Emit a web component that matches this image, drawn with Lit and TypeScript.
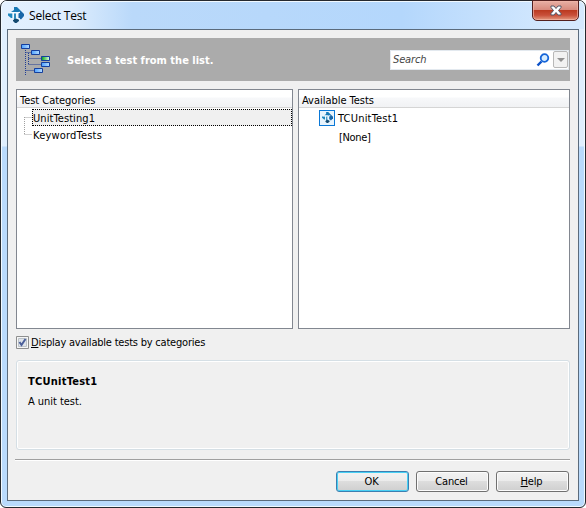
import { LitElement, html, css, svg } from "lit";
import { customElement } from "lit/decorators.js";

const logo = svg`
  <path d="M3 5L6 3V0L9 0L13 4V5Z" fill="#1778b4"/>
  <path d="M0 6.500H4.500V11H3L0 8.500Z" fill="#1e87bd"/>
  <path d="M10.500 6L13 4L16 7V9L13 12.500L10.500 11Z" fill="#1766a8"/>
  <path d="M6 11L11 12.500V14L8.500 16H7L5 14V12Z" fill="#154a70"/>
  <path d="M6 6.500H8V12H6Z" fill="#2d8abb"/>
  <path d="M1.500 5.500H8.500M5.200 5.500V13M12 5.500C7.500 5 7.500 12.500 12 11.800" fill="none" stroke="#f4faff" stroke-width="1.200"/>`;

@customElement("app-root")
export class AppRoot extends LitElement {
  static styles = css`
    * { box-sizing: border-box; }
    :host { display: block; width: 586px; height: 508px; background: #fff;
      font: 11px/14px "DejaVu Sans Condensed", "DejaVu Sans", sans-serif; font-stretch: condensed; color: #000; }
    svg { display: block; flex: none; }
    .window { position: relative; width: 586px; height: 508px; border: 1px solid #25292f; border-radius: 7px 7px 6px 6px;
      box-shadow: inset 0 0 0 1px #f1f9ff; padding: 0 6px 6px; display: flex; flex-direction: column;
      background: linear-gradient(#e0effe 0 145px, #b9dafc 146px 100%); }
    .title { height: 28px; flex: none; display: flex; align-items: center; margin: 0 -5px; padding-left: 6px; gap: 5px; border-radius: 5px 5px 0 0;
      background: linear-gradient(90deg, #e4f1ff 0, #dcecfd 70px, #bad9fa 130px, #b4d7fc 400px, #d5e9fe 560px); box-shadow: inset 0 1px #f1f9ff; }
    .title span { font: 12px/16px "Open Sans", "Noto Sans", sans-serif; letter-spacing: -.2px; padding-top: 1px; }
    .close { position: absolute; right: 6px; top: -1px; width: 47px; height: 21px; border: 1px solid #53201f; border-radius: 0 0 5px 5px;
      background: linear-gradient(#e8b0a5, #d98b7e 45%, #bb3a21 50%, #c9503a 75%, #e39a80); box-shadow: inset 0 0 0 1px #f3b5a8aa;
      display: flex; align-items: center; justify-content: center; }
    .client { flex: 1; border: 1px solid #5b6b7c; background: #f0f0f0; padding: 8px 8px 0; }
    .banner { height: 43px; background: #ababab; display: flex; align-items: center; padding: 0 1px 0 5px; }
    .banner b { margin-left: 16px; color: #fff; flex: 1; padding-top: 2px; }
    .search { width: 179px; height: 20px; background: #fff; border: 1px solid #e3e9ef; display: flex; align-items: center; padding-left: 2px; }
    .search i { flex: 1; color: #444; letter-spacing: -.15px; }
    .drop { width: 15px; height: 17px; border: 1px solid #b8b8b8; border-radius: 2px; background: #f2f2f2; display: flex; align-items: center; justify-content: center; margin-left: 3px; }
    .lists { display: flex; gap: 5px; margin-top: 8px; height: 240px; }
    .list { border: 1px solid #828790; background: #fff; flex: 1; }
    .left { flex: 0 0 277px; }
    .head { height: 18px; padding: 3px 3px 0; border-bottom: 1px solid #d5d5d5; background: linear-gradient(#fff 0 7px, #f7f8fa 8px, #f1f2f4); line-height: 15px; letter-spacing: -.03px; }
    .tree { display: flex; padding-top: 1px; }
    .rows { flex: 1; }
    .row { height: 17px; border: 1px dotted transparent; display: flex; align-items: center; padding-top: 2px; letter-spacing: .08px; }
    .row + .row { letter-spacing: .2px; }
    .sel { background: #f0f0f0; border-color: #000; }
    .item { height: 19px; display: flex; align-items: center; gap: 3px; padding-left: 20px; letter-spacing: .2px; }
    .item span { padding-top: 2px; }
    .none { padding-left: 40px; letter-spacing: -.35px; }
    .badge { width: 16px; height: 16px; border: 1px solid #0a78d7; background: #e8f4fd; display: flex; align-items: center; justify-content: center; }
    .check { display: flex; height: 13px; margin-top: 7px; align-items: center; gap: 2px; letter-spacing: -.21px; }
    u { text-decoration: underline; text-underline-offset: 1px; text-decoration-thickness: 1px; }
    .group { margin-top: 11px; height: 90px; border: 1px solid #d5dfe5; border-radius: 3px; box-shadow: inset 0 0 0 1px #fff; padding: 14px 11px; }
    .group b { letter-spacing: .24px; }
    .group div { margin-top: 6px; letter-spacing: -.04px; }
    .sep { margin: 9px 0 0 -1px; height: 2px; border-top: 1px solid #a0a0a0; background: #fff; }
    .buttons { display: flex; justify-content: flex-end; gap: 7px; margin: 10px 1px 0 0; }
    button { font: inherit; color: #000; width: 73px; height: 21px; padding: 0 2px 0 0; border: 1px solid #707070; border-radius: 3px; box-shadow: inset 0 0 0 1px #fcfcfc;
      background: linear-gradient(#f2f2f2, #ebebeb 49%, #ddd 50%, #cfcfcf); letter-spacing: -.2px; }
    .ok { border-color: #3c7fb1; box-shadow: inset 0 0 0 1px #48d0f4; }
  `;

  render() {
    return html`<div class="window">
      <div class="title"><svg width="16" height="16" viewBox="0 0 16 16">${logo}</svg><span>Select Test</span></div>
      <div class="close"><svg width="12" height="11" viewBox="0 0 12 11"><path d="M1 1H4L6 3.500L8 1H11V2.500L8.500 5.500L11 8.500V10H8L6 7.500L4 10H1V8.500L3.500 5.500L1 2.500Z" fill="#fff" stroke="#535666"/></svg></div>
      <div class="client">
        <div class="banner">
          <svg width="30" height="32" viewBox="0 0 30 32">
            <defs>
              <linearGradient id="blue"><stop stop-color="#4da0ff"/><stop offset="1" stop-color="#b4dcff"/></linearGradient>
              <linearGradient id="green"><stop stop-color="#00a018"/><stop offset="1" stop-color="#e4ffe4"/></linearGradient>
            </defs>
            <path d="M4.500 6V32M7.500 9V21M4.500 8.500H10M7.500 14.500H20M7.500 20.500H20M4.500 26.500H13" fill="none" stroke="#1f3d94" stroke-dasharray="1 1"/>
            <g stroke="#153f9d">
              <path d="M.5 .5h8v4h-8z" fill="url(#blue)"/><path d="M10.500 6.500h8v4h-8z" fill="url(#blue)"/>
              <path d="M20.500 18.500h8v4h-8z" fill="url(#blue)"/><path d="M13.500 24.500h8v4h-8z" fill="url(#blue)"/>
              <path d="M20.500 12.500h8v4h-8z" fill="url(#green)"/>
            </g>
          </svg>
          <b>Select a test from the list.</b>
          <div class="search"><i>Search</i>
            <svg width="14" height="14" viewBox="0 0 14 14"><path d="M1.500 12.500L5.500 8.500" stroke="#0a50c8" stroke-width="2.400"/><circle cx="8.500" cy="5" r="3.800" fill="#d5ecff" stroke="#1464d8" stroke-width="1.800"/></svg>
            <div class="drop"><svg width="8" height="4"><path d="M0 0H8L4 4Z" fill="#929292"/></svg></div>
          </div>
        </div>
        <div class="lists">
          <div class="list left"><div class="head"><span>Test Categories</span></div>
            <div class="tree"><svg width="15" height="34"><path d="M7.500 8V26M7.500 8.500H15M7.500 25.500H15" fill="none" stroke="#a0a0a0" stroke-dasharray="1 1"/></svg>
              <div class="rows"><div class="row sel"><span>UnitTesting1</span></div><div class="row"><span>KeywordTests</span></div></div></div>
          </div>
          <div class="list"><div class="head"><span>Available Tests</span></div>
            <div class="item"><div class="badge"><svg width="11" height="11" viewBox="0 0 16 16">${logo}</svg></div><span>TCUnitTest1</span></div>
            <div class="item none"><span>[None]</span></div>
          </div>
        </div>
        <div class="check"><svg width="13" height="13"><path d="M.5 .5h12v12H.5z" fill="#f6f6f6" stroke="#8e8f8f"/><path d="M2.500 2.500h8v8h-8z" fill="#dfe4ea" stroke="#bcc2c8"/><path d="M3.500 6L5.500 9L9.500 3" fill="none" stroke="#4b5f9a" stroke-width="2"/></svg><span><u>D</u>isplay available tests by categories</span></div>
        <div class="group"><b>TCUnitTest1</b><div>A unit test.</div></div>
        <div class="sep"></div>
        <div class="buttons"><button class="ok">OK</button><button>Cancel</button><button><u>H</u>elp</button></div>
      </div>
    </div>`;
  }
}
